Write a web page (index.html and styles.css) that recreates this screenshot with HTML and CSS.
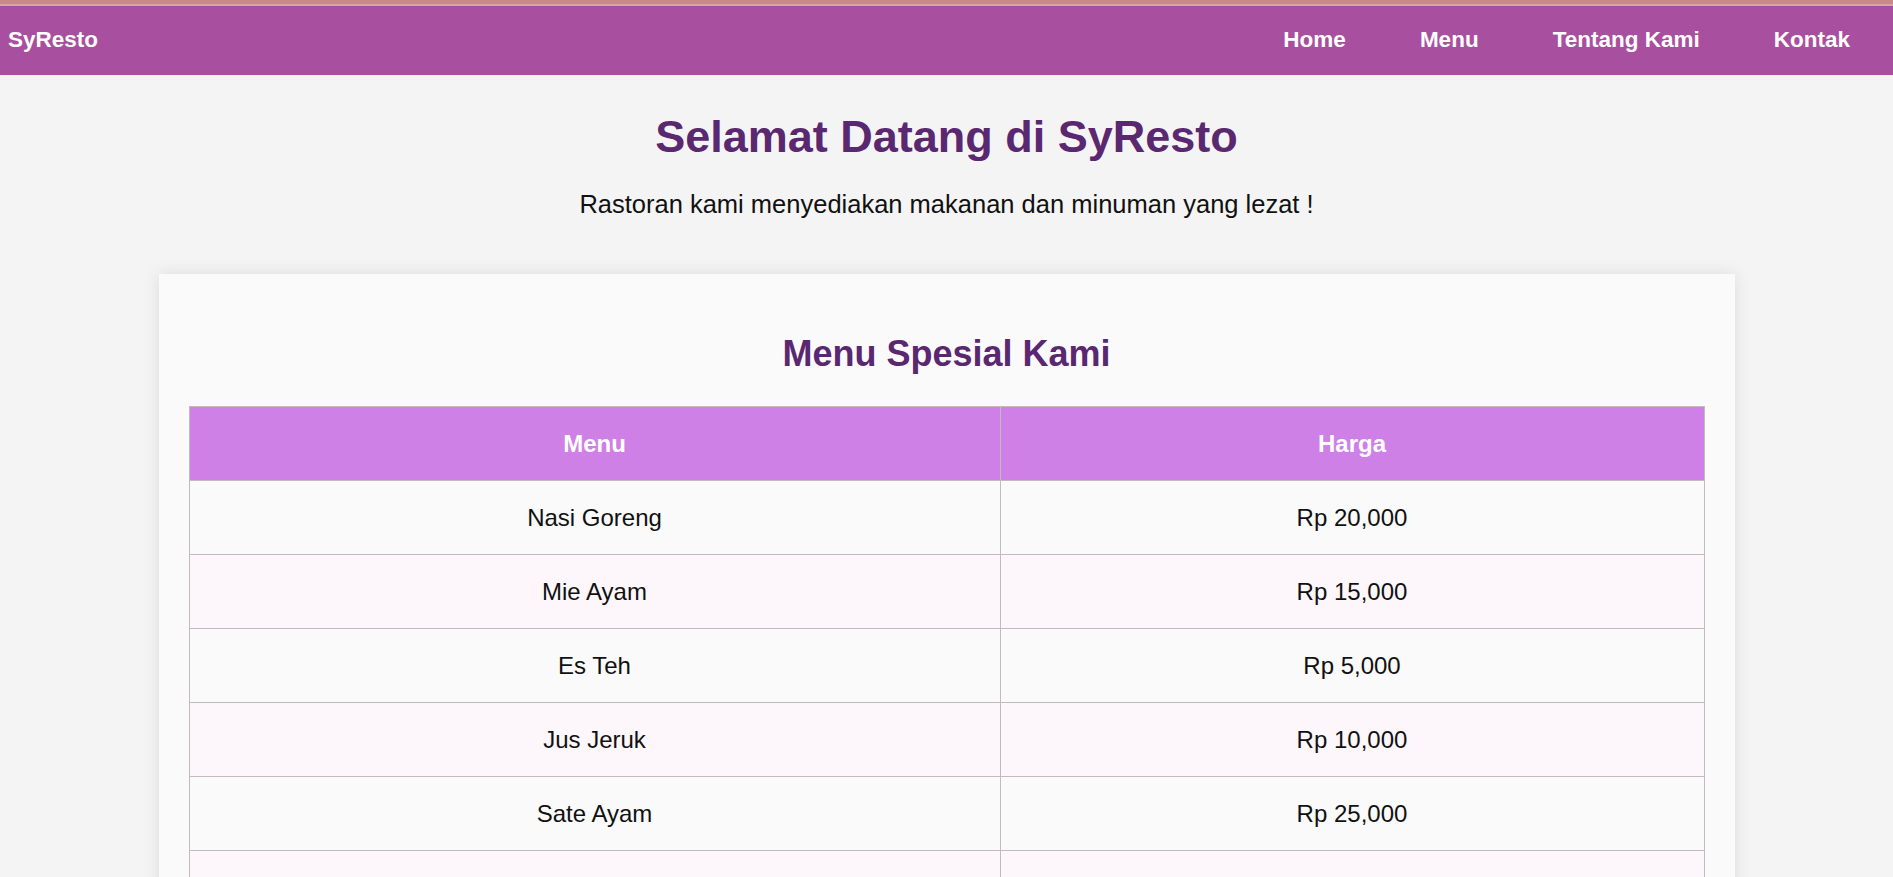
FILE: index.html
```html
<!DOCTYPE html>
<html lang="id">
<head>
<meta charset="utf-8">
<title>SyResto</title>
<link rel="stylesheet" href="styles.css">
</head>
<body>
<header class="navbar">
  <div class="logo">SyResto</div>
  <nav>
    <ul class="nav-links">
      <li><a href="#">Home</a></li>
      <li><a href="#">Menu</a></li>
      <li><a href="#">Tentang Kami</a></li>
      <li><a href="#">Kontak</a></li>
    </ul>
  </nav>
</header>
<section class="hero">
  <h1>Selamat Datang di SyResto</h1>
  <p>Rastoran kami menyediakan makanan dan minuman yang lezat !</p>
</section>
<main class="card">
  <h2>Menu Spesial Kami</h2>
  <table class="menu-table">
    <thead>
      <tr><th class="col-menu">Menu</th><th>Harga</th></tr>
    </thead>
    <tbody>
      <tr><td>Nasi Goreng</td><td>Rp 20,000</td></tr>
      <tr><td>Mie Ayam</td><td>Rp 15,000</td></tr>
      <tr><td>Es Teh</td><td>Rp 5,000</td></tr>
      <tr><td>Jus Jeruk</td><td>Rp 10,000</td></tr>
      <tr><td>Sate Ayam</td><td>Rp 25,000</td></tr>
      <tr><td>&nbsp;</td><td>&nbsp;</td></tr>
    </tbody>
  </table>
</main>
</body>
</html>
```

FILE: styles.css
```css
html, body {
  margin: 0;
  padding: 0;
}
body {
  background: #f4f4f4;
  font-family: "Liberation Sans", Arial, sans-serif;
  color: #111;
}
.navbar {
  display: flex;
  align-items: center;
  justify-content: space-between;
  height: 71px;
  background: #a94fa0;
  border-top: 4px solid #c88a84;
  box-shadow: inset 0 2px 0 #d9a79c;
  padding: 0 43px 0 8px;
}
.logo {
  color: #fff;
  font-weight: bold;
  font-size: 22.5px;
  line-height: 26px;
}
.nav-links {
  list-style: none;
  margin: 0;
  padding: 0;
  display: flex;
  gap: 74px;
}
.nav-links a {
  color: #fff;
  text-decoration: none;
  font-weight: bold;
  font-size: 22.5px;
  line-height: 26px;
}
.hero {
  text-align: center;
  padding-top: 36px;
}
.hero h1 {
  margin: 0;
  font-size: 45px;
  line-height: 52px;
  color: #5a2771;
}
.hero p {
  margin: 27px 0 0;
  font-size: 25.5px;
  line-height: 29px;
  color: #111;
}
.card {
  width: 1576px;
  box-sizing: border-box;
  margin: 55px auto 0;
  background: #fafafa;
  padding: 60px 30px 30px;
  box-shadow: 0 0 16px rgba(0, 0, 0, 0.1);
}
.card h2 {
  margin: 0 0 32px;
  text-align: center;
  font-size: 36px;
  line-height: 40px;
  color: #5a2771;
}
.menu-table {
  width: 100%;
  border-collapse: collapse;
  font-size: 24px;
}
.menu-table th,
.menu-table td {
  border: 1px solid #c4b9bd;
  text-align: center;
  line-height: 28px;
  padding: 22.5px 10px;
}
.menu-table .col-menu {
  width: 811px;
  box-sizing: border-box;
}
.menu-table th {
  background: #cf80e6;
  color: #fff;
  font-weight: bold;
}
.menu-table tbody tr:nth-child(odd) td {
  background: #fafafa;
}
.menu-table tbody tr:nth-child(even) td {
  background: #fdf7fb;
}
```
